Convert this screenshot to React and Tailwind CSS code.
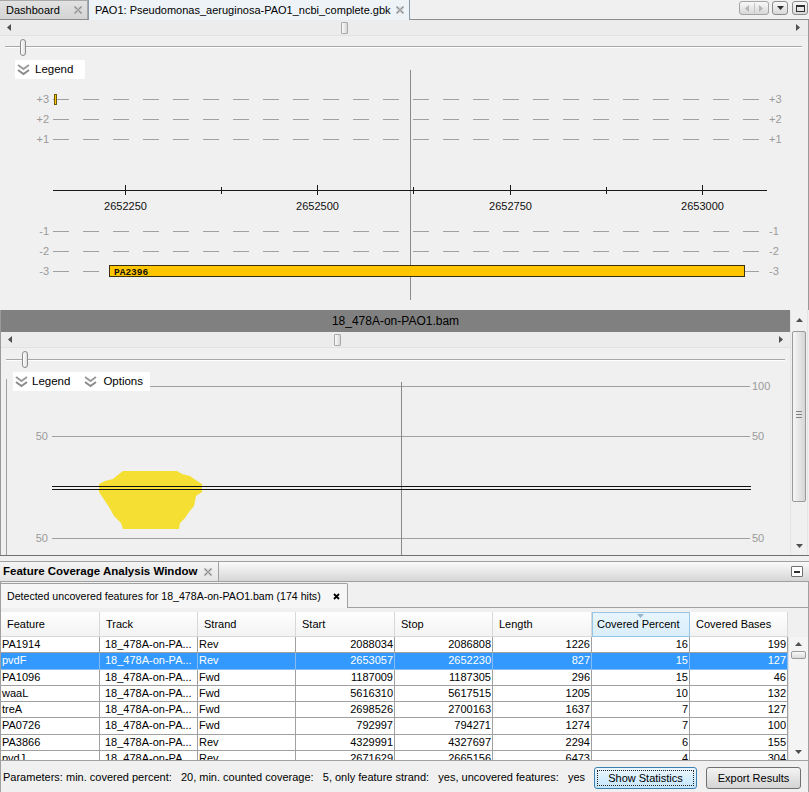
import React from "react";

const CloseGlyph = () => (
  <svg width="8" height="8" viewBox="0 0 8 8" className="shrink-0">
    <path d="M0.5 0.5L7.5 7.5M7.5 0.5L0.5 7.5" stroke="#8a8a8a" strokeWidth="1.4" />
    <path d="M2 0.5L7.5 6M0.5 2L6 7.5M6 0.5L0.5 6M7.5 2L2 7.5" stroke="#c4c4c4" strokeWidth="0.8" />
  </svg>
);

const Chevrons = () => (
  <svg width="13" height="12" viewBox="0 0 13 12" className="shrink-0">
    <polyline points="1,1 6.5,5 12,1" fill="none" stroke="#9a9a9a" strokeWidth="2" />
    <polyline points="1,6 6.5,10 12,6" fill="none" stroke="#8a8a8a" strokeWidth="2" />
  </svg>
);

const LeftTri = ({ c = "#505050" }) => (
  <svg width="4" height="7" viewBox="0 0 4 7"><polygon points="4,0 4,7 0,3.5" fill={c} /></svg>
);
const RightTri = ({ c = "#505050" }) => (
  <svg width="4" height="7" viewBox="0 0 4 7"><polygon points="0,0 0,7 4,3.5" fill={c} /></svg>
);
const UpTri = () => (
  <svg width="7" height="4" viewBox="0 0 7 4"><polygon points="0,4 7,4 3.5,0" fill="#505050" /></svg>
);
const DownTri = ({ c = "#505050" }) => (
  <svg width="7" height="4" viewBox="0 0 7 4"><polygon points="0,0 7,0 3.5,4" fill={c} /></svg>
);

const dashX = Array.from({ length: 24 }, (_, i) => 53 + 30 * i);

function Chart1() {
  const rows = [
    { y: 41, l: "+3" },
    { y: 61, l: "+2" },
    { y: 81, l: "+1" },
    { y: 173, l: "-1" },
    { y: 193, l: "-2" },
  ];
  const major = [
    { x: 125, l: "2652250" },
    { x: 317, l: "2652500" },
    { x: 510, l: "2652750" },
    { x: 702, l: "2653000" },
  ];
  const minor = [221, 413, 606];
  return (
    <svg width="808" height="252" viewBox="0 0 808 252" className="absolute left-0 top-0" fontFamily="'Liberation Sans', Arial, sans-serif">
      {rows.map((r) => (
        <g key={r.l}>
          {dashX.map((x) => (
            <line key={x} x1={x} x2={x + 16} y1={r.y + 0.5} y2={r.y + 0.5} stroke="#a0a0a0" />
          ))}
          <text x="49" y={r.y + 4} fontSize="11" fill="#9a9a9a" textAnchor="end">{r.l}</text>
          <text x="769" y={r.y + 4} fontSize="11" fill="#9a9a9a">{r.l}</text>
        </g>
      ))}
      {dashX.filter((x) => x + 16 <= 109).map((x) => (
        <line key={x} x1={x} x2={x + 16} y1={213.5} y2={213.5} stroke="#a0a0a0" />
      ))}
      <line x1="745" x2="759" y1="213.5" y2="213.5" stroke="#a0a0a0" />
      <text x="49" y="217" fontSize="11" fill="#9a9a9a" textAnchor="end">-3</text>
      <text x="769" y="217" fontSize="11" fill="#9a9a9a">-3</text>
      <line x1="410.5" x2="410.5" y1="12" y2="242" stroke="#8a8a8a" />
      <line x1="53" x2="767" y1="132.5" y2="132.5" stroke="#1a1a1a" />
      {major.map((m) => (
        <g key={m.l}>
          <line x1={m.x + 0.5} x2={m.x + 0.5} y1="127" y2="137" stroke="#1a1a1a" />
          <text x={m.x + 0.5} y="152" fontSize="11" fill="#111" textAnchor="middle">{m.l}</text>
        </g>
      ))}
      {minor.map((x) => (
        <line key={x} x1={x + 0.5} x2={x + 0.5} y1="129" y2="136" stroke="#1a1a1a" />
      ))}
      <rect x="54.5" y="36.5" width="2" height="10" fill="#ffc800" stroke="#6b5a10" strokeWidth="1" />
      <rect x="109.5" y="207.5" width="635" height="11" fill="#ffc600" stroke="#3a3010" strokeWidth="1" />
      <text x="114" y="216.5" fontSize="9.5" fontWeight="bold" fill="#111" fontFamily="'Liberation Mono', monospace">PA2396</text>
    </svg>
  );
}

function Chart2() {
  const blob = [
    [122, 471], [176, 471], [181, 474], [189, 476], [196, 481], [201, 484], [201, 492], [195, 496],
    [193, 506], [188, 512], [184, 518], [179, 523], [178, 529], [122, 529], [120, 523], [113, 516],
    [108, 507], [102, 498], [98, 492], [98, 484], [104, 481], [112, 479], [118, 474],
  ].map(([x, y]) => `${x},${y - 368}`).join(" ");
  return (
    <svg width="790" height="187" viewBox="0 0 790 187" className="absolute left-0 top-0" fontFamily="'Liberation Sans', Arial, sans-serif">
      <line x1="5.5" x2="5.5" y1="11" y2="187" stroke="#a0a0a0" />
      <line x1="51" x2="749" y1="18.5" y2="18.5" stroke="#a0a0a0" />
      <text x="751" y="22" fontSize="11" fill="#9a9a9a">100</text>
      <line x1="51" x2="749" y1="68.5" y2="68.5" stroke="#a0a0a0" />
      <text x="47" y="72" fontSize="11" fill="#9a9a9a" textAnchor="end">50</text>
      <text x="751" y="72" fontSize="11" fill="#9a9a9a">50</text>
      <line x1="51" x2="749" y1="170.5" y2="170.5" stroke="#a0a0a0" />
      <text x="47" y="174" fontSize="11" fill="#9a9a9a" textAnchor="end">50</text>
      <text x="751" y="174" fontSize="11" fill="#9a9a9a">50</text>
      <line x1="400.5" x2="400.5" y1="14" y2="187" stroke="#8a8a8a" />
      <polygon points={blob} fill="#f5df33" />
      <line x1="51" x2="750" y1="118.5" y2="118.5" stroke="#111" />
      <line x1="51" x2="750" y1="121.5" y2="121.5" stroke="#111" />
    </svg>
  );
}

const HScroll = ({ thumbLeft, rightArrowRight }) => (
  <div className="h-[16px] bg-[#ececec] border-b border-[#e2e2e2] relative flex items-center">
    <div className="ml-[7px]"><LeftTri /></div>
    <div className="absolute top-[2px] h-[12px] w-[7px] rounded-[1px] border border-[#a8a8a8] bg-linear-to-r from-[#fafafa] to-[#d8d8d8]" style={{ left: thumbLeft }} />
    <div className="ml-auto" style={{ marginRight: rightArrowRight }}><RightTri /></div>
  </div>
);

const Slider = ({ h, trackTop, trackRight, thumbLeft, thumbTop }) => (
  <div className="relative" style={{ height: h }}>
    <div className="absolute left-[5px] h-[2px] bg-[#a8a8a8] border-b border-white" style={{ top: trackTop, right: trackRight }} />
    <div className="absolute w-[6px] h-[17px] rounded-[3px] border border-[#8a8a8a] bg-linear-to-r from-white to-[#e0e0e0]" style={{ left: thumbLeft, top: thumbTop }} />
  </div>
);

const rows = [
  ["PA1914", "Rev", "2088034", "2086808", "1226", "16", "199"],
  ["pvdF", "Rev", "2653057", "2652230", "827", "15", "127"],
  ["PA1096", "Fwd", "1187009", "1187305", "296", "15", "46"],
  ["waaL", "Fwd", "5616310", "5617515", "1205", "10", "132"],
  ["treA", "Fwd", "2698526", "2700163", "1637", "7", "127"],
  ["PA0726", "Fwd", "792997", "794271", "1274", "7", "100"],
  ["PA3866", "Rev", "4329991", "4327697", "2294", "6", "155"],
  ["pvdJ", "Rev", "2671629", "2665156", "6473", "4", "304"],
];

const headers = ["Feature", "Track", "Strand", "Start", "Stop", "Length", "Covered Percent", "Covered Bases"];

export default function App() {
  return (
    <div className="w-[809px] h-[792px] overflow-hidden bg-[#f0f0f0] text-[11px] text-black font-['Liberation_Sans',Arial,sans-serif] flex flex-col leading-none">
      {/* top tab bar */}
      <div className="h-[20px] shrink-0 flex items-end border-b border-[#8c8c8c]">
        <div className="h-[19px] w-[88px] flex items-center bg-linear-to-b from-[#e2e2e2] to-[#d4d4d4] border-t border-r border-[#a8a8a8] pl-[6px] pr-[4px]">
          <span>Dashboard</span>
          <span className="ml-auto mr-[1px]"><CloseGlyph /></span>
        </div>
        <div className="h-[21px] w-[322px] -mb-px flex items-center bg-[#eef3f8] border-x border-t border-[#8a98a8] pl-[6px] pr-[5px]">
          <span>PAO1: Pseudomonas_aeruginosa-PAO1_ncbi_complete.gbk</span>
          <span className="ml-auto"><CloseGlyph /></span>
        </div>
        <div className="flex-1" />
        <div className="self-start mt-[1px] flex gap-[3px] mr-[1px]">
          <div className="w-[30px] h-[14px] rounded-[3px] border border-[#a4a4a4] bg-linear-to-b from-[#f8f8f8] to-[#d8d8d8] flex items-center">
            <div className="flex-1 flex justify-center"><LeftTri c="#b4b4b4" /></div>
            <div className="w-px h-[10px] bg-[#c4c4c4]" />
            <div className="flex-1 flex justify-center"><RightTri c="#b4b4b4" /></div>
          </div>
          <div className="w-[16px] h-[14px] rounded-[3px] border border-[#8c8c8c] bg-linear-to-b from-[#f8f8f8] to-[#d8d8d8] flex items-center justify-center">
            <DownTri c="#303030" />
          </div>
          <div className="w-[16px] h-[14px] ml-[1px] rounded-[3px] border border-[#8c8c8c] bg-linear-to-b from-[#f8f8f8] to-[#d8d8d8] flex items-center justify-center">
            <div className="w-[9px] h-[7px] border border-[#303030] border-t-[2px]" />
          </div>
        </div>
      </div>

      {/* panel 1 */}
      <div className="h-[290px] shrink-0 border-r border-[#9a9a9a] flex flex-col">
        <HScroll thumbLeft={341} rightArrowRight={8} />
        <Slider h={22} trackTop={10} trackRight={6} thumbLeft={20} thumbTop={3} />
        <div className="relative flex-1">
          <Chart1 />
          <div className="absolute left-[15px] top-[2px] w-[70px] h-[19px] bg-white flex items-center gap-[5px] pl-[2px]">
            <Chevrons />
            <span className="text-[11.5px]">Legend</span>
          </div>
        </div>
      </div>

      {/* panel 2 */}
      <div className="h-[246px] shrink-0 flex border-b border-[#707070]">
        <div className="w-[790px] flex flex-col border-l border-[#9a9a9a]">
          <div className="h-[22px] shrink-0 bg-[#808080] flex items-center justify-center text-[12px] text-black">
            18_478A-on-PAO1.bam
          </div>
          <HScroll thumbLeft={333} rightArrowRight={7} />
          <Slider h={20} trackTop={11} trackRight={5} thumbLeft={21} thumbTop={3} />
          <div className="relative flex-1">
            <Chart2 />
            <div className="absolute left-[12px] top-[4px] w-[137px] h-[19px] bg-white flex items-center pl-[2px]">
              <Chevrons />
              <span className="ml-[4px] text-[11.5px]">Legend</span>
              <span className="ml-[14px]"><Chevrons /></span>
              <span className="ml-[6px] text-[11.5px]">Options</span>
            </div>
          </div>
        </div>
        <div className="w-[18px] flex flex-col items-center bg-[#f0f0f0] border-l border-[#e4e4e4] border-r border-[#9a9a9a]">
          <div className="h-[20px] flex items-center"><UpTri /></div>
          <div className="w-[14px] h-[171px] mt-[1px] rounded-[2px] border border-[#9a9a9a] bg-linear-to-r from-[#f6f6f6] to-[#d6d6d6] flex items-center justify-center">
            <div className="w-[6px] flex flex-col gap-[2px] mt-[-4px]">
              <div className="h-px bg-[#808080]" />
              <div className="h-px bg-[#808080]" />
              <div className="h-px bg-[#808080]" />
            </div>
          </div>
          <div className="mt-auto mb-[7px]"><DownTri /></div>
        </div>
      </div>

      {/* bottom area */}
      <div className="flex-1 flex flex-col pt-[5px]">
        <div className="h-[21px] shrink-0 flex border-y border-[#a0a0a0]">
          <div className="w-[219px] flex items-center bg-linear-to-b from-[#f4f4f4] to-[#e4e4e4] border-r border-[#a0a0a0] pl-[3px] pr-[6px]">
            <span className="font-bold text-[11.5px]">Feature Coverage Analysis Window</span>
            <span className="ml-auto"><CloseGlyph /></span>
          </div>
          <div className="flex-1 bg-linear-to-b from-[#fafafa] to-[#d6d6d6] flex items-center justify-end pr-[6px]">
            <div className="w-[12px] h-[11px] border border-[#707070] rounded-[1px] bg-white flex items-center justify-center">
              <div className="w-[6px] h-[2px] bg-[#303030]" />
            </div>
          </div>
        </div>
        <div className="flex-1 flex flex-col border-x border-[#a0a0a0]">
          <div className="h-[26px] shrink-0 flex">
            <div className="w-[347px] mt-[1px] flex items-center bg-[#f6f6f6] border-t border-r border-[#a0a0a0] rounded-tr-[2px] pl-[6px] pr-[7px]">
              <span className="text-[10.6px]">Detected uncovered features for 18_478A-on-PAO1.bam (174 hits)</span>
              <svg width="7" height="7" viewBox="0 0 7 7" className="ml-auto">
                <path d="M1 1L6 6M6 1L1 6" stroke="#000" strokeWidth="1.8" />
              </svg>
            </div>
            <div className="flex-1 border-b border-[#a0a0a0]" />
          </div>
          <div className="h-[4px] shrink-0" />
          {/* table */}
          <div className="h-[149px] shrink-0 flex border-b border-[#a0a0a0]">
            <div className="w-[787px] flex flex-col bg-white">
              <div className="grid grid-cols-[99px_98px_98px_99px_98px_99px_98px_98px] h-[25px] shrink-0 bg-linear-to-b from-white to-[#f2f2f2]">
                {headers.map((h) =>
                  h === "Covered Percent" ? (
                    <div key={h} className="relative flex items-center pl-[4px] bg-linear-to-b from-[#e8f5fd] to-[#d9eefb] border border-[#96c6e6]">
                      {h}
                      <svg width="7" height="4" viewBox="0 0 7 4" className="absolute left-[44px] top-[1px]">
                        <polygon points="0,0 7,0 3.5,4" fill="#98b4c8" />
                      </svg>
                    </div>
                  ) : (
                    <div key={h} className="flex items-center pl-[6px] border-r border-b border-[#d8d8d8]">{h}</div>
                  )
                )}
              </div>
              <div className="flex-1 overflow-hidden">
                {rows.map((r, i) => {
                  const sel = i === 1;
                  const cell = `h-full flex items-center border-r border-b ${sel ? "border-[#86bcf3] text-white" : "border-[#a0a0a0]"}`;
                  return (
                    <div key={r[0]} className={`grid grid-cols-[99px_98px_98px_99px_98px_99px_98px_98px] h-[16.25px] ${sel ? "bg-[#3399ff]" : ""}`}>
                      <div className={`${cell} pl-[1px]`}>{r[0]}</div>
                      <div className={`${cell} pl-[5px]`}>18_478A-on-PA...</div>
                      <div className={`${cell} pl-[1px]`}>{r[1]}</div>
                      <div className={`${cell} justify-end pr-[1px]`}>{r[2]}</div>
                      <div className={`${cell} justify-end pr-[1px]`}>{r[3]}</div>
                      <div className={`${cell} justify-end pr-[1px]`}>{r[4]}</div>
                      <div className={`${cell} justify-end pr-[1px]`}>{r[5]}</div>
                      <div className={`${cell} justify-end pr-[1px]`}>{r[6]}</div>
                    </div>
                  );
                })}
              </div>
            </div>
            <div className="flex-1 flex flex-col">
              <div className="h-[25px]" />
              <div className="flex-1 flex flex-col items-center bg-[#f4f4f4] border-l border-[#e0e0e0]">
                <div className="h-[14px] flex items-center"><UpTri /></div>
                <div className="w-[15px] h-[8px] rounded-[2px] border border-[#9a9a9a] bg-linear-to-b from-[#f8f8f8] to-[#dadada]" />
                <div className="mt-auto mb-[6px]"><DownTri /></div>
              </div>
            </div>
          </div>
          {/* status */}
          <div className="flex-1 flex items-center">
            <span className="whitespace-pre pl-[2px] mt-[1px]">Parameters: min. covered percent:   20, min. counted coverage:   5, only feature strand:   yes, uncovered features:   yes</span>
            <div className="ml-auto mr-[7px] flex gap-[9px] mt-[3px]">
              <div className="w-[103px] h-[22px] rounded-[3px] border border-[#3c7fb1] bg-linear-to-b from-[#ecf7fe] to-[#c4e6fb] p-[2px]">
                <div className="w-full h-full border border-dotted border-[#222] flex items-center justify-center">Show Statistics</div>
              </div>
              <div className="w-[95px] h-[22px] rounded-[3px] border border-[#707070] bg-linear-to-b from-[#f4f4f4] to-[#d4d4d4] flex items-center justify-center">Export Results</div>
            </div>
          </div>
        </div>
      </div>
    </div>
  );
}
